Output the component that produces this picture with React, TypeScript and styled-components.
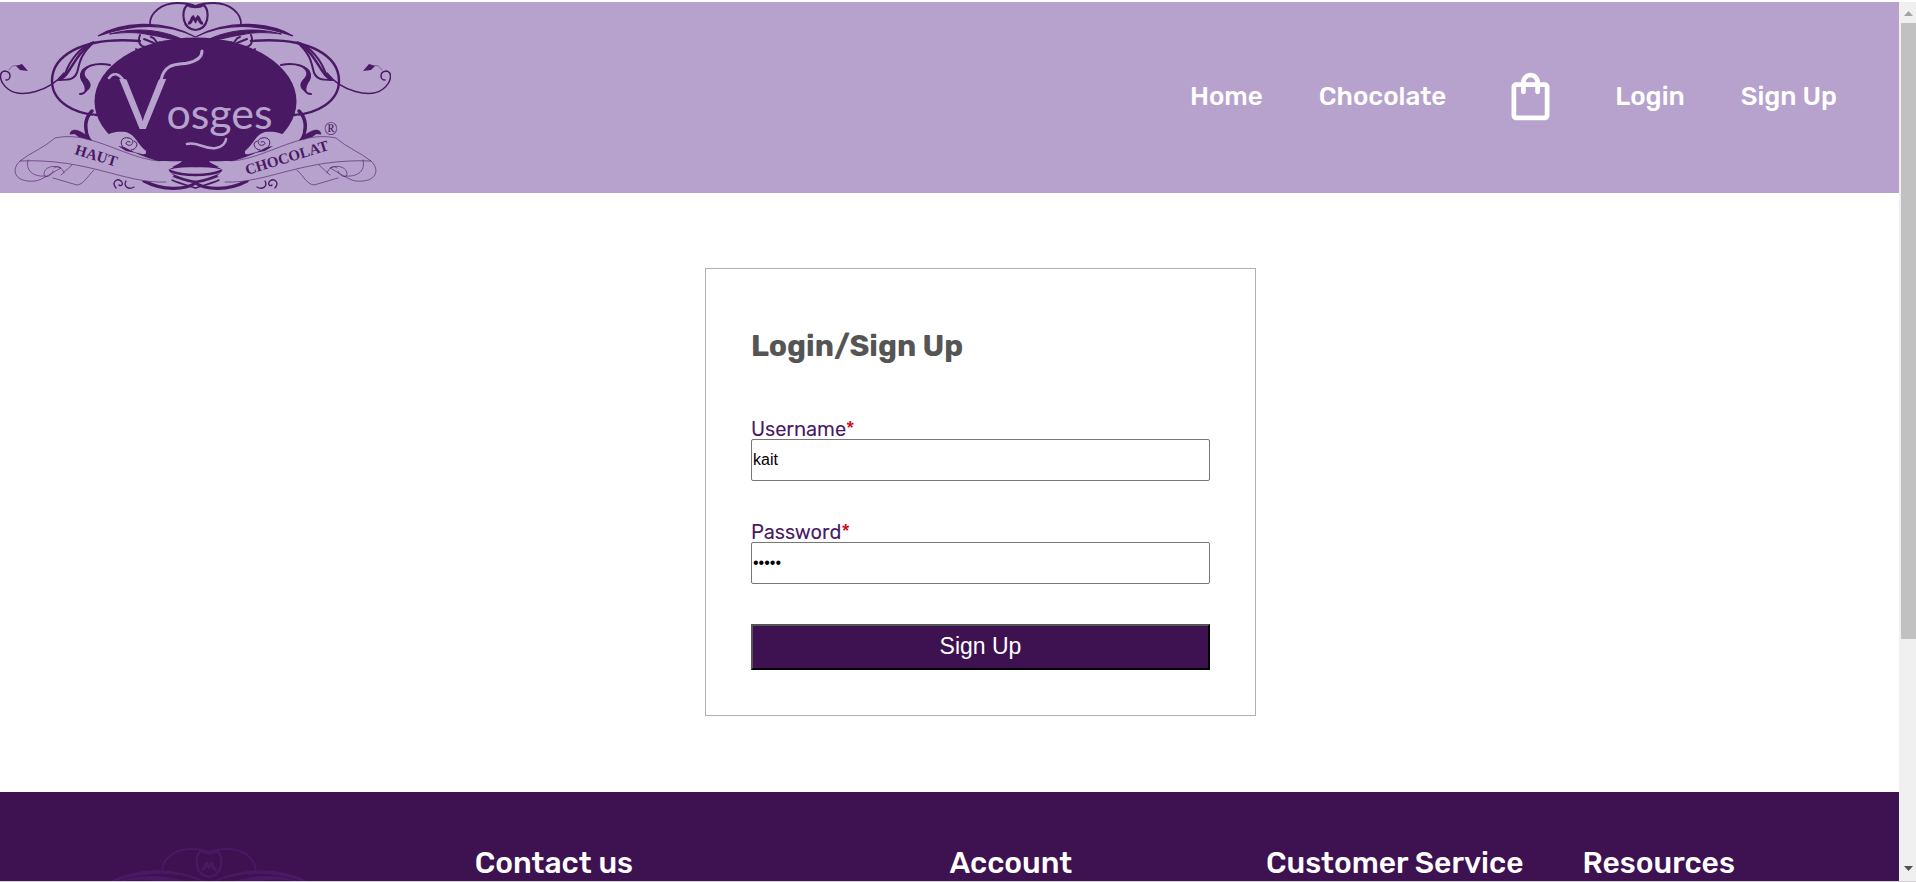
import React, { useState } from "react";
import styled, { createGlobalStyle } from "styled-components";

const GlobalStyle = createGlobalStyle`
  *, *::before, *::after { box-sizing: border-box; }
  body {
    margin: 0;
    background: #fff;
    font-family: Rubik, Roboto, sans-serif;
  }
`;

const Shell = styled.div`
  display: flex;
  height: 100vh;
  border-top: 2px solid #fff;
  border-bottom: 1px solid #d6d3d9;
`;

const Page = styled.div`
  flex: 1;
  min-width: 0;
  overflow: hidden;
`;

const Header = styled.header`
  display: flex;
  justify-content: space-between;
  background: #b7a2cd;
  padding-bottom: 3px;
`;

const LogoLink = styled.a`
  display: block;
  line-height: 0;
`;

const LogoArt = styled.svg<{ $ink: string; $paper: string; $width: number }>`
  width: ${(p) => p.$width}px;
  height: auto;
  color: ${(p) => p.$ink};
  --paper: ${(p) => p.$paper};
`;

const Nav = styled.nav`
  display: flex;
  align-items: center;
  gap: 56px;
  padding-right: 62px;
`;

const NavLink = styled.a`
  display: block;
  padding-top: 2px;
  color: #fff;
  font-size: 26px;
  font-weight: 500;
  line-height: 32px;
  text-decoration: none;
`;

const BagLink = styled.a`
  display: block;
  line-height: 0;
`;

const Main = styled.main`
  display: flex;
  justify-content: center;
  padding: 75px 0 76px 62px;
`;

const Card = styled.form`
  width: 551px;
  max-width: 100%;
  padding: 45px;
  border: 1px solid #b0b0b0;
`;

const Title = styled.h2`
  margin: 14px 0 52px;
  color: #555;
  font-size: 30px;
  font-weight: 700;
  line-height: 36px;
`;

const Fields = styled.div`
  display: grid;
  gap: 38px;
`;

const Field = styled.div``;

const Label = styled.label`
  display: block;
  padding-top: 3px;
  color: #4a1a66;
  font-size: 20px;
  line-height: 20px;
`;

const Required = styled.span`
  color: #cc0a1e;
`;

const Input = styled.input`
  display: block;
  width: 100%;
  height: 42px;
  padding: 1px;
  border: 1px solid #767676;
  border-radius: 2px;
  color: #000;
  background: #fff;
  font-family: Arial, "Liberation Sans", sans-serif;
  font-size: 16px;
`;

const Submit = styled.button`
  display: block;
  width: 100%;
  height: 46px;
  margin-top: 40px;
  padding: 0 0 2px;
  border: 2px solid;
  border-color: #555 #000 #000 #555;
  color: #fff;
  background: #3e1151;
  font-family: Arial, "Liberation Sans", sans-serif;
  font-size: 23px;
  line-height: 28px;
`;

const Footer = styled.footer`
  display: grid;
  grid-template-columns: 3fr 3fr 2fr 2fr 2fr;
  padding-top: 53px;
  background: #3e1151;
`;

const FooterLogo = styled.div`
  padding: 3px 0 0 9px;
  line-height: 0;
`;

const FooterHeading = styled.h3`
  margin: 0;
  color: #fff;
  font-size: 30px;
  font-weight: 500;
  line-height: 36px;
  white-space: nowrap;
`;

const Scrollbar = styled.div`
  display: flex;
  flex-direction: column;
  width: 17px;
  padding: 4px 0 8px 2px;
  background: #f0f0f0;
`;

const ScrollArrow = styled.svg`
  display: block;
  flex: none;
  width: 15px;
  height: 17px;
`;

const ScrollTrack = styled.div`
  flex: 1;
  display: flex;
  flex-direction: column;
`;

const ScrollThumb = styled.div`
  height: 74%;
  background: #c1c1c1;
`;

function HalfOrnament() {
  return (
    <g fill="none" stroke="currentColor" strokeLinecap="round">
      <path d="M150 25C149 13 162 3 177 3C186 3 191 4 195.500 6" strokeWidth="1.800" />
      <path d="M98 36C120 23 160 18 195.500 37C165 22 132 24 98 36Z" fill="currentColor" strokeWidth="1.300" />
      <path d="M110 34C135 27 162 29 186 41C170 40 160 36 150 35C138 32 125 32 110 34Z" fill="currentColor" strokeWidth="1" />
      <path d="M140 41C80 36 52 57 52 81C52 102 75 114 97 115" strokeWidth="2.400" />
      <path d="M140 35C137 43 141 47 146 47M144 39L154 43M151 37C157 38 155 45 160 42M136 49L140 52" strokeWidth="2" />
      <path d="M94 42C80 47 70 60 65 74L59 80C69 80 76 80 78 69C80 60 82 53 94 42Z" fill="var(--paper)" strokeWidth="2" />
      <path d="M90 45C82 50 77 58 70 69C66 75 65 77 61 79" strokeWidth="2.500" />
      <path d="M64 73C50 91 21 99 8 89C-2 81 -1 71 5 71C12 72 11 80 6 80" strokeWidth="1.500" />
      <path d="M16 66L22 64L28 71L20 70Z" fill="currentColor" stroke="none" />
      <path d="M9 70C12 65 15 65 19 66" strokeWidth="0.500" />
      <path d="M110 65C96 62 83 66 81 75C80 83 89 83 86 90C85 93 82 94 80 94" strokeWidth="2" />
      <path d="M90 66C82 68 80 72 81 77C83 84 86 86 85 92C92 88 91 83 87 79C82 74 84 70 90 66Z" fill="currentColor" strokeWidth="1" />
      <path d="M92 111C84 119 84 130 90 140" strokeWidth="3.500" />
      <path d="M70 134C70 130 75 129 79 131C85 134 88 135 90 141L83 138C79 138 78 136 75 134Z" fill="currentColor" strokeWidth="0.500" />
      <path d="M94 115C98 122 100 129 107 136C101 141 94 140 91 139C86 132 87 121 94 115Z" fill="var(--paper)" stroke="none" />

      <path d="M164 170C176 165 186 166 195.500 166M167 173C178 178 188 181 195.500 182M170 171C180 175 188 175 195.500 175" strokeWidth="2.500" />
      <path d="M144 181C163 191 185 190 195.500 183" strokeWidth="3.200" />
      <path d="M172 180C180 184 188 185 195.500 188" strokeWidth="1.500" />

      <path d="M104 137C110 132 118 131 126 132C136 135 137 144 146 151C147 156 142 154 138 153C128 151 122 147 118 146Z" fill="var(--paper)" stroke="none" />
      <path d="M124 148C118 143 122 136 129 138C136 140 132 147 128 145C124 144 127 140 130 142M134 141C140 143 136 150 131 150" strokeWidth="1" />
      <path d="M118 146L124 147L136 153L126 151Z" fill="currentColor" stroke="none" />
      <path d="M55 138C64 136 76 136 86 139C110 144 136 160 160 161L182 161C178 166 173 167 168 170L174 176C169 178 167 181 166 182C125 184 88 158 20 161C30 153 45 147 55 138Z" fill="var(--paper)" stroke="none" />
      <path d="M160 160C170 162 176 161 184 161L172 167L195.500 167L195.500 160Z" fill="currentColor" stroke="none" />
      <path d="M166 182C125 184 88 158 20 161C30 153 45 147 55 138C64 136 76 136 86 139C110 144 136 160 160 161" strokeWidth="1" strokeOpacity="0.600" />
      <path d="M20 161C10 170 15 183 35 181C42 180 48 175 61 168C52 164 44 168 44 174C44 179 52 176 53 171M28 160C25 173 36 177 46 176M53 178L77 185C84 184 86 178 94 170M64 173C62 167 57 165 54 168M72 165L61 175" strokeWidth="1" strokeOpacity="0.600" />
      <path d="M116 188C111 182 117 178 121 181C124 184 121 187 119 185M126 181C123 187 129 190 134 187" strokeWidth="1.300" />
    </g>
  );
}

function VosgesLogo({
  ink,
  paper,
  width,
  lettered = false,
}: {
  ink: string;
  paper: string;
  width: number;
  lettered?: boolean;
}) {
  return (
    <LogoArt
      viewBox="0 2 391 188"
      role="img"
      aria-label="Vosges Haut Chocolat"
      $ink={ink}
      $paper={paper}
      $width={width}
    >
      <ellipse cx="195.500" cy="101.500" rx="101" ry="64" fill="currentColor" />
      <HalfOrnament />
      <g transform="translate(391 0) scale(-1 1)">
        <HalfOrnament />
      </g>
      <path
        d="M187 5C181 12 182 29 195.500 30C209 29 210 12 204 5C199 8 192 8 187 5Z"
        fill="var(--paper)"
        stroke="currentColor"
        strokeWidth="2.200"
      />
      <path
        d="M188 23C192 24 191 18 193 17L195.500 21L198 17C200 18 199 24 203 23"
        fill="none"
        stroke="currentColor"
        strokeWidth="3"
      />
      {lettered && (
        <>
          <text
            x="119"
            y="129"
            fill="var(--paper)"
            fontFamily="Lato, sans-serif"
            fontSize="43"
          >
            <tspan fontSize="70">V</tspan>osges
          </text>
          <g fill="none" stroke="var(--paper)" strokeLinecap="round">
            <path d="M109 78C113 72 119 73 124 81" strokeWidth="2.500" />
            <path d="M161 80C165 62 178 65 188 63C197 61 202 57 202 51" strokeWidth="3" />
            <path d="M187 144C197 141 205 150 216 148C222 147 226 143 226 139" strokeWidth="2.500" />
          </g>
          <g fill="currentColor" fontFamily="'Liberation Serif', serif">
            <text transform="translate(74 154) rotate(17)" fontSize="15" fontWeight="700">HAUT</text>
            <text transform="translate(247 175) rotate(-17)" fontSize="15" fontWeight="700">CHOCOLAT</text>
            <text x="324" y="135" fontSize="18">®</text>
          </g>
        </>
      )}
    </LogoArt>
  );
}

function BagIcon() {
  return (
    <svg width="57" height="57" viewBox="0 0 24 24" fill="#fff" aria-hidden="true">
      <path d="M18 6h-2c0-2.210-1.790-4-4-4S8 3.790 8 6H6c-1.100 0-2 .9-2 2v12c0 1.100.9 2 2 2h12c1.100 0 2-.9 2-2V8c0-1.100-.9-2-2-2zm-6-2c1.100 0 2 .9 2 2h-4c0-1.100.9-2 2-2zm6 16H6V8h2v2c0 .55.45 1 1 1s1-.45 1-1V8h4v2c0 .55.45 1 1 1s1-.45 1-1V8h2v12z" />
    </svg>
  );
}

export default function App() {
  const [username, setUsername] = useState("kait");
  const [password, setPassword] = useState("cocoa");

  return (
    <>
      <GlobalStyle />
      <Shell>
        <Page>
          <Header>
            <LogoLink href="#home">
              <VosgesLogo ink="#4a1964" paper="#b7a2cd" width={391} lettered />
            </LogoLink>
            <Nav>
              <NavLink href="#home">Home</NavLink>
              <NavLink href="#chocolate">Chocolate</NavLink>
              <BagLink href="#cart" aria-label="Shopping bag">
                <BagIcon />
              </BagLink>
              <NavLink href="#login">Login</NavLink>
              <NavLink href="#signup">Sign Up</NavLink>
            </Nav>
          </Header>
          <Main>
            <Card onSubmit={(e: React.FormEvent) => e.preventDefault()}>
              <Title>Login/Sign Up</Title>
              <Fields>
                <Field>
                  <Label htmlFor="username">
                    Username<Required>*</Required>
                  </Label>
                  <Input id="username" value={username} onChange={(e) => setUsername(e.target.value)} />
                </Field>
                <Field>
                  <Label htmlFor="password">
                    Password<Required>*</Required>
                  </Label>
                  <Input
                    id="password"
                    type="password"
                    value={password}
                    onChange={(e) => setPassword(e.target.value)}
                  />
                </Field>
              </Fields>
              <Submit type="submit">Sign Up</Submit>
            </Card>
          </Main>
          <Footer>
            <FooterLogo>
              <VosgesLogo ink="#4a1964" paper="#3e1151" width={400} />
            </FooterLogo>
            <FooterHeading>Contact us</FooterHeading>
            <FooterHeading>Account</FooterHeading>
            <FooterHeading>Customer Service</FooterHeading>
            <FooterHeading>Resources</FooterHeading>
          </Footer>
        </Page>
        <Scrollbar aria-hidden="true">
          <ScrollArrow viewBox="0 0 15 17">
            <path d="M3 10L7.500 5L12 10Z" fill="#a3a3a3" />
          </ScrollArrow>
          <ScrollTrack>
            <ScrollThumb />
          </ScrollTrack>
          <ScrollArrow viewBox="0 0 15 17">
            <path d="M3 10L7.500 15L12 10Z" fill="#505050" />
          </ScrollArrow>
        </Scrollbar>
      </Shell>
    </>
  );
}
